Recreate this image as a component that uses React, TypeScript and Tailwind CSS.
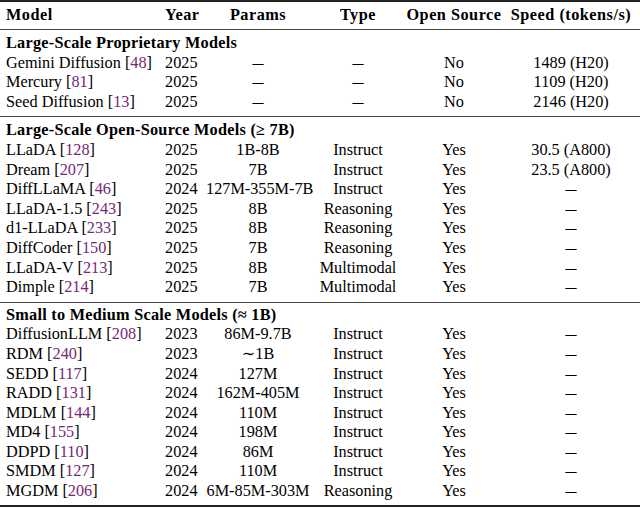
import React from "react";

type Row = {
  model: string;
  cite: string;
  year: string;
  params: string;
  type: string;
  open: string;
  speed: string;
};

const DASH = "–";

const sections: Array<{ title: string; rows: Row[]; pt: string; pb: string }> = [
  {
    title: "Large-Scale Proprietary Models",
    pt: "pt-[4px]",
    pb: "pb-[4px]",
    rows: [
      { model: "Gemini Diffusion", cite: "48", year: "2025", params: DASH, type: DASH, open: "No", speed: "1489 (H20)" },
      { model: "Mercury", cite: "81", year: "2025", params: DASH, type: DASH, open: "No", speed: "1109 (H20)" },
      { model: "Seed Diffusion", cite: "13", year: "2025", params: DASH, type: DASH, open: "No", speed: "2146 (H20)" },
    ],
  },
  {
    title: "Large-Scale Open-Source Models (≥ 7B)",
    pt: "pt-[4px]",
    pb: "pb-[4px]",
    rows: [
      { model: "LLaDA", cite: "128", year: "2025", params: "1B-8B", type: "Instruct", open: "Yes", speed: "30.5 (A800)" },
      { model: "Dream", cite: "207", year: "2025", params: "7B", type: "Instruct", open: "Yes", speed: "23.5 (A800)" },
      { model: "DiffLLaMA", cite: "46", year: "2024", params: "127M-355M-7B", type: "Instruct", open: "Yes", speed: DASH },
      { model: "LLaDA-1.5", cite: "243", year: "2025", params: "8B", type: "Reasoning", open: "Yes", speed: DASH },
      { model: "d1-LLaDA", cite: "233", year: "2025", params: "8B", type: "Reasoning", open: "Yes", speed: DASH },
      { model: "DiffCoder", cite: "150", year: "2025", params: "7B", type: "Reasoning", open: "Yes", speed: DASH },
      { model: "LLaDA-V", cite: "213", year: "2025", params: "8B", type: "Multimodal", open: "Yes", speed: DASH },
      { model: "Dimple", cite: "214", year: "2025", params: "7B", type: "Multimodal", open: "Yes", speed: DASH },
    ],
  },
  {
    title: "Small to Medium Scale Models (≈ 1B)",
    pt: "pt-[3px]",
    pb: "pb-[3px]",
    rows: [
      { model: "DiffusionLLM", cite: "208", year: "2023", params: "86M-9.7B", type: "Instruct", open: "Yes", speed: DASH },
      { model: "RDM", cite: "240", year: "2023", params: "∼1B", type: "Instruct", open: "Yes", speed: DASH },
      { model: "SEDD", cite: "117", year: "2024", params: "127M", type: "Instruct", open: "Yes", speed: DASH },
      { model: "RADD", cite: "131", year: "2024", params: "162M-405M", type: "Instruct", open: "Yes", speed: DASH },
      { model: "MDLM", cite: "144", year: "2024", params: "110M", type: "Instruct", open: "Yes", speed: DASH },
      { model: "MD4", cite: "155", year: "2024", params: "198M", type: "Instruct", open: "Yes", speed: DASH },
      { model: "DDPD", cite: "110", year: "2024", params: "86M", type: "Instruct", open: "Yes", speed: DASH },
      { model: "SMDM", cite: "127", year: "2024", params: "110M", type: "Instruct", open: "Yes", speed: DASH },
      { model: "MGDM", cite: "206", year: "2024", params: "6M-85M-303M", type: "Reasoning", open: "Yes", speed: DASH },
    ],
  },
];

const grid = "grid grid-cols-[160px_46px_104px_96px_96px_138px] items-center";

// the dash in the table is a little wider than the font's en dash
function Cell({ v }: { v: string }) {
  if (v === DASH) return <span className="inline-block scale-x-[1.35]">{DASH}</span>;
  return <>{v}</>;
}

function DataRow({ r }: { r: Row }) {
  return (
    <div className={`${grid} h-[19.6px]`}>
      <div className="pl-[6px] whitespace-nowrap">
        {r.model} [<span className="text-[#74287a]">{r.cite}</span>]
      </div>
      <div className="pl-[5px]">{r.year}</div>
      <div className="text-center whitespace-nowrap">
        <Cell v={r.params} />
      </div>
      <div className="text-center whitespace-nowrap">
        <Cell v={r.type} />
      </div>
      <div className="text-center">{r.open}</div>
      <div className="text-center whitespace-nowrap">
        <Cell v={r.speed} />
      </div>
    </div>
  );
}

export default function App() {
  return (
    <div
      className="w-[640px] h-[508px] bg-white text-black text-[16.25px] leading-[19.6px] overflow-hidden"
      style={{ fontFamily: '"Liberation Serif", "DejaVu Serif", serif' }}
    >
      <div className="border-t-2 border-[#222]" />
      <div className={`${grid} h-[27px] font-bold tracking-[0.5px]`}>
        <div className="pl-[6px]">Model</div>
        <div className="pl-[5px]">Year</div>
        <div className="text-center">Params</div>
        <div className="text-center">Type</div>
        <div className="text-center whitespace-nowrap">Open Source</div>
        <div className="text-center whitespace-nowrap">Speed (tokens/s)</div>
      </div>
      {sections.map((s, i) => (
        <div key={i} className={`border-t border-[#444] ${s.pt} ${s.pb}`}>
          <div className="h-[19.6px] pl-[6px] font-bold tracking-[0.25px] whitespace-nowrap">{s.title}</div>
          {s.rows.map((r, j) => (
            <DataRow key={j} r={r} />
          ))}
        </div>
      ))}
      <div className="border-t-2 border-[#222]" />
    </div>
  );
}
